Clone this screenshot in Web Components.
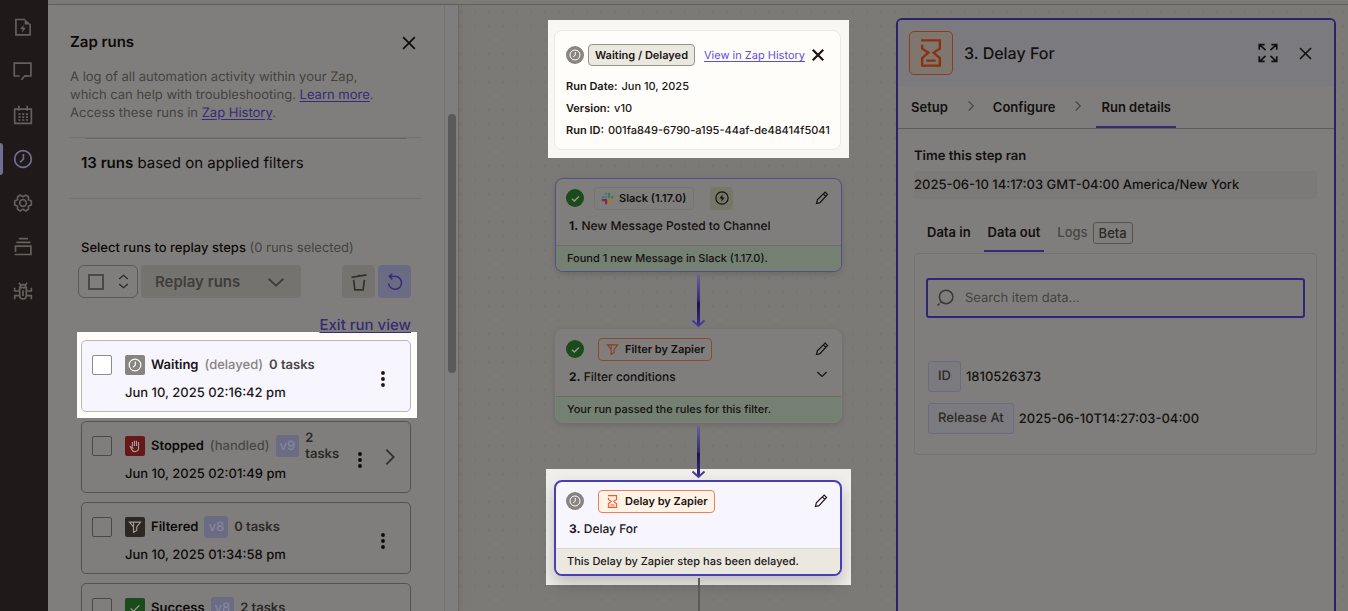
<!DOCTYPE html>
<html lang="en">
<head>
<meta charset="utf-8">
<title>Zap editor</title>
<style>
html, body { margin: 0; height: 100%; }
body { overflow: hidden; background: #7c7a77; font-family: Inter, "Open Sans", sans-serif; font-size: 13px; color: #0d0a09; text-rendering: geometricPrecision; }
</style>
</head>
<body>
<zap-editor></zap-editor>
<script>
const ICONS = {
  zapfile: '<path d="M14.5 2.5H3.5v18.500h17V8" transform="translate(0 .5)"/><path d="M14 2.500 21.500 9H14z" fill="currentColor" stroke="none"/><path d="M12.800 9.500 8.500 14.500h3l-.7 4 4.700-5.500h-3z" fill="currentColor" stroke="none"/>',
  comment: '<path d="M13.500 18H21.500V2.500H1.500V18H8"/><path d="M10 22.500 14 18H18"/>',
  calendar: '<path d="M2 5h20v17H2z"/><path d="M7 1v6M17 1v6"/><path d="M6.500 11h2.500M11 11h2.500M15.500 11H18M6.500 14.500h2.500M11 14.500h2.500M15.500 14.500H18M6.500 18h2.500M11 18h2.500M15.500 18H18"/>',
  clock: '<circle cx="12" cy="12" r="10"/><path d="M12.500 6v6L8.500 16"/>',
  gear: '<circle cx="12" cy="12" r="4"/><path d="M8.800 2.500 12 4.500 15.200 2.500 18.500 4.500V8L22 9.500V14.500L18.500 16V19.500L15.200 21.500 12 19.500 8.800 21.500 5.500 19.500V16L2 14.500V9.500L5.500 8V4.500z" stroke-linejoin="round"/>',
  stack: '<path d="M7 2h11M4 6.500h17M2 21h19.500V11H3v7"/>',
  bug: '<path d="M8 8h8v9c0 2.500-1.500 4.500-4 4.500S8 19.500 8 17z"/><path d="M8.500 8c0-5 7-5 7 0M7 2l2.500 3M17 2l-2.500 3M2 8v4h6M22 8v4h-6M2 22v-4.500h6M22 22v-4.500h-6M12 11v7"/>',
  close: '<path d="m5 5 14 14M19 5 5 19"/>',
  chevdown: '<path d="m4 8.500 8 7.500 8-7.500"/>',
  chevright: '<path d="m8 4 8 8-8 8"/>',
  updown: '<path d="m5 8 7-6 7 6M5 16l7 6 7-6"/>',
  trash: '<path d="M3 6.500 21 3.500M10 5l4-1M5.500 9.500 7 21.500h10L18.500 9.500"/>',
  replay: '<path d="M3.500 14a8.600 8.600 0 1 0 8.500-9.500H5"/><path d="M8.500 1 4.500 4.500l4 4"/>',
  kebab: '<g fill="currentColor" stroke="none"><circle cx="12" cy="4.800" r="2.300"/><circle cx="12" cy="12" r="2.300"/><circle cx="12" cy="19.200" r="2.300"/></g>',
  hand: '<path d="M7.500 13V5M11 12V3M14.500 12V3M18 12V5M18 10v6c0 3.500-2.500 5.500-6 5.500-3 0-5-1.500-6-4L4 13l3.500 1.500 1.500 2.500"/>',
  filter: '<path d="M2.500 3.500h19L15 12v6l-5.500 3V12L2.500 3.500h7v8"/>',
  check: '<path d="m4.500 12.500 5 5 10-10"/>',
  hourglass: '<path d="M3.500 1.200H19.600V8.300L14.200 11.700 19.600 16.300V22.800H4.400V16.300L9.800 11.700 4.400 8.300V5M8 18.600h8"/>',
  pencil: '<path d="m2.500 21.500 1.500-6.500L17.500 2 21.500 6 8.500 20z M14 4.500l5 5"/>',
  bolt: '<circle cx="12" cy="12" r="10.500"/><path d="M13 5.500 7.500 13H11.500L11 18.500 16.500 11H12.500z" fill="currentColor" stroke="none"/>',
  expand: '<path d="M1.500 8V2h6.500M2 2l7 6.500M16 2h6.500v6M22 2l-7 6.500M1.500 16v6h6.500M2 22l7-6.500M22.500 16v6H16M22 22l-7-6.500"/>',
  search: '<circle cx="13.500" cy="10.500" r="9"/><path d="m7 17-1.500 1.500M4.500 19.500 2 22"/>',
  slack: '<g stroke="none"><rect fill="#8a2440" x="1" y="13" width="10" height="4" rx="2"/><rect fill="#8a2440" x="7.500" y="13" width="4" height="10" rx="2"/><rect fill="#3f7c8c" x="7.500" y="1" width="4" height="4.500" rx="2"/><rect fill="#3f7c8c" x="1" y="7.500" width="10.500" height="4" rx="2"/><rect fill="#3b7a5a" x="13" y="1" width="4" height="10.500" rx="2"/><rect fill="#3b7a5a" x="18.500" y="7.500" width="4.500" height="4" rx="2"/><rect fill="#a07c28" x="13" y="13" width="10" height="4" rx="2"/><rect fill="#a07c28" x="13" y="18.500" width="4" height="4.500" rx="2"/></g>'
};
const sheet = css => `<style>*{box-sizing:border-box} button{font:inherit;color:inherit;background:none;border:0;padding:0;margin:0;text-align:left} ${css}</style>`;
const define = (name, css, html) => customElements.define(name, class extends HTMLElement {
  constructor() {
    super();
    this.attachShadow({ mode: 'open' });
  }
  connectedCallback() {
    this.shadowRoot.innerHTML = sheet(css) + (typeof html === 'function' ? html(this) : html);
  }
});

define('z-icon', ':host{display:inline-flex;flex:none} svg{display:block;overflow:visible}',
  el => `<svg width="${el.getAttribute('size') || 20}" height="${el.getAttribute('size') || 20}" viewBox="0 0 24 24" fill="none" stroke="currentColor" stroke-width="${el.getAttribute('weight') || 2}" aria-hidden="true">${ICONS[el.getAttribute('name')]}</svg>`);

/* Left navigation rail */
define('side-rail', `
  :host{display:block;flex:none;width:48px;background:#1f1a19;color:#64605d;padding-top:5px}
  nav{display:flex;flex-direction:column}
  button{height:44px;width:100%;display:flex;align-items:center;justify-content:center;position:relative;padding-right:2px}
  button[aria-current]{color:#716d94}
  button[aria-current]::before{content:"";position:absolute;left:0;top:6px;width:3px;height:32px;background:#716d94;border-radius:0 3px 3px 0}
`, `<nav aria-label="Editor">
  <button aria-label="Zap details"><z-icon name="zapfile"></z-icon></button>
  <button aria-label="Notes"><z-icon name="comment"></z-icon></button>
  <button aria-label="Schedule"><z-icon name="calendar"></z-icon></button>
  <button aria-label="Zap runs" aria-current="page"><z-icon name="clock"></z-icon></button>
  <button aria-label="Settings"><z-icon name="gear"></z-icon></button>
  <button aria-label="Versions"><z-icon name="stack"></z-icon></button>
  <button aria-label="Troubleshoot"><z-icon name="bug"></z-icon></button>
</nav>`);

/* One entry in the list of runs */
define('run-card', `
  :host{display:flex;align-items:stretch;height:72px;border:1px solid #555351;border-radius:5px;padding:0 15px 0 10px;color:#0d0a09}
  :host([lit]){background:#f7f5fe;border-color:#b9b6b0;--tick:#fff;--muted:#88847f;--tasks:#4a4542;--tickline:#8f8b87;color:#201515}
  input{appearance:none;flex:none;width:20px;height:20px;margin:14px 13px 0 0;border:1px solid #47443f;background:var(--tick,#807e7c);border-color:var(--tickline,#4b4846);border-radius:2px}
  .body{flex:1;min-width:0;padding-top:13px}
  .row{display:flex;align-items:center;gap:6px;height:22px;font-weight:600;line-height:16px;white-space:nowrap}
  .row>*{flex:none}
  .tile{width:20px;height:20px;border-radius:2px;display:grid;place-items:center;background:var(--tile);color:var(--glyph,#a09c98)}
  .note{font-weight:500;color:var(--muted,#4a4845)}
  .ver{background:#6c6b84;color:#86859f;border-radius:3px;height:22px;padding:0 4px;line-height:22px;font-weight:500}
  .row>.tasks{flex:0 1 auto;min-width:0;white-space:normal;color:var(--tasks,#2c2927)}
  .date{margin-top:7px;line-height:20px;font-weight:500}
  .menu{align-self:center;display:grid;place-items:center;width:24px;height:24px;margin-top:5px}
  .open{align-self:center;width:10px;margin-left:13px;display:flex;justify-content:center;color:#33302e}
`, el => {
  const a = n => el.getAttribute(n);
  return `<input type="checkbox" aria-label="Select ${a('status')} run">
  <div class="body"><div class="row"><span class="tile" style="--tile:${a('tile')}${el.hasAttribute('lit') ? ';--glyph:#fff' : ''}"><z-icon name="${a('icon')}" size="14"></z-icon></span>
  <span>${a('status')}</span>${a('note') ? `<span class="note">(${a('note')})</span>` : ''}${a('version') ? `<span class="ver">${a('version')}</span>` : ''}<span class="tasks">${a('tasks')}</span></div>
  <div class="date"><slot></slot></div></div>
  <button class="menu" aria-label="Run actions"><z-icon name="kebab" size="20"></z-icon></button>
  ${el.hasAttribute('expandable') ? '<button class="open" aria-label="Open run"><z-icon name="chevright" size="22"></z-icon></button>' : ''}`;
});

/* Zap runs panel */
define('runs-panel', `
  :host{display:flex;flex:none;width:411px;background:#807e7c;border-right:1px solid #6b6967;box-shadow:3px 0 5px #0000000d;position:relative;z-index:1}
  .main{flex:1;min-width:0;overflow:hidden;padding:0 22px}
  header{display:flex;align-items:center;justify-content:space-between;height:24px;margin-top:25px;padding-right:3px}
  h1{margin:0;font-size:15px;font-weight:600;line-height:24px}
  header button{display:grid;color:#0d0a09;padding-top:2px}
  p{margin:14px 0 0;line-height:18px;color:#44423f;white-space:nowrap}
  a{color:#352b78;text-underline-offset:2px}
  .rule{border-top:1px solid #747270;margin:15px 0 0}
  .rule i{display:block;height:1px;margin:0 15px;background:#6b6967}
  .count{font-size:15px;line-height:24px;padding:12px 11px 23px}
  .count b{font-weight:600}
  .line{border-top:1px solid #747270}
  .select{font-weight:500;line-height:20px;margin:39px 0 0 11px}
  .select span{color:#44423f;font-weight:400}
  .tools{display:flex;align-items:center;gap:3px;margin:7px 11px 0 8px}
  .bulk{display:flex;align-items:center;justify-content:space-between;width:60px;height:33px;border:1px solid #5c5a58;border-radius:6px;padding:0 6px 0 9px;color:#2c2927}
  .bulk input{appearance:none;margin:0;width:16px;height:16px;border:2px solid #4b4846}
  .bulk button{display:grid}
  .replay{display:flex;align-items:center;justify-content:space-between;width:160px;height:33px;padding:0 14px;background:#757370;color:#403d3a;font-size:15px;font-weight:600;border-radius:4px}
  .sq{width:33px;height:33px;display:grid;place-items:center;border-radius:4px;background:#757370;color:#33302e}
  .tools .push{margin-left:auto}
  .sq.blue{background:#6c6b84;color:#352b78}
  .exit{display:flex;justify-content:flex-end;margin:15px 11px 0 0;font-size:15px;line-height:24px;font-weight:500}
  .exit a{position:relative;z-index:1}
  .spot{background:#fffdf9;margin:-5px 5px 0 7px;padding:8px 6px 6px 4px}
  .cards{display:flex;flex-direction:column;gap:9px;margin:3px 11px 0 11px}
  .bar{flex:none;width:14px;border-left:1px solid #747270;background:#7f7e7f;padding:109px 2px 0 3px}
  .bar i{display:block;width:8px;height:259px;border-radius:4px;background:#5b5a5a}
`, `<div class="main">
  <header><h1>Zap runs</h1><button aria-label="Close Zap runs"><z-icon name="close"></z-icon></button></header>
  <p>A log of all automation activity within your Zap,<br>which can help with troubleshooting. <a href="#">Learn more</a>.<br>Access these runs in <a href="#">Zap History</a>.</p>
  <div class="rule"><i></i></div>
  <div class="count"><b>13 runs</b> based on applied filters</div>
  <div class="line"></div>
  <div class="select">Select runs to replay steps <span>(0 runs selected)</span></div>
  <div class="tools"><div class="bulk"><input type="checkbox" aria-label="Select all runs"><button aria-label="Selection options"><z-icon name="updown" size="15" weight="2"></z-icon></button></div>
    <button class="replay">Replay runs <z-icon name="chevdown" size="22"></z-icon></button>
    <button class="sq push" aria-label="Clear"><z-icon name="trash"></z-icon></button>
    <button class="sq blue" aria-label="Refresh"><z-icon name="replay" size="18"></z-icon></button></div>
  <div class="exit"><a href="#">Exit run view</a></div>
  <div class="spot"><run-card lit icon="clock" tile="#88847f" status="Waiting" note="delayed" tasks="0 tasks">Jun 10, 2025 02:16:42 pm</run-card></div>
  <div class="cards">
    <run-card expandable icon="hand" tile="#661818" status="Stopped" note="handled" version="v9" tasks="2 tasks">Jun 10, 2025 02:01:49 pm</run-card>
    <run-card icon="filter" tile="#2c2625" status="Filtered" version="v8" tasks="0 tasks">Jun 10, 2025 01:34:58 pm</run-card>
    <run-card icon="check" tile="#1b4a1b" status="Success" version="v8" tasks="2 tasks"></run-card>
  </div></div><div class="bar"><i></i></div>`);

define('status-dot', `
  :host{display:grid;place-items:center;flex:none;width:18px;height:18px;border-radius:50%;background:#1b4a1b;color:#9a9895}
  :host([kind=wait]){background:#88847f;color:#fff}
`, el => el.getAttribute('kind') === 'wait' ? '<z-icon name="clock" size="12"></z-icon>' : '<z-icon name="check" size="11" weight="3"></z-icon>');

/* Step card on the canvas */
define('flow-card', `
  :host{display:block;flex:none;width:287px;background:#807e7c;border:1px solid #807e7c;border-radius:8px;box-shadow:0 2px 6px #0002;overflow:hidden;color:#13100f}
  :host([trigger]){border-color:#544d8a}
  :host([lit]){width:288px;border:2px solid #4a3db8;background:#f7f5fe;color:#201515;box-shadow:0 8px 16px #0003}
  .top{display:flex;align-items:center;height:22px;margin:8px 12px 0 10px}
  .chip{display:flex;align-items:center;gap:5px;height:23px;border:1px solid #777573;border-radius:4px;padding:0 7px 0 6px;margin-left:10px;font-size:11px;font-weight:600;white-space:nowrap}
  .chip.orange{border-color:#8b4a35;margin-left:14px;gap:6px;padding:0 6px 0 7px}
  .chip.orange z-icon{color:#8b3d1e}
  :host([lit]) .chip{background:#fff3e6;border-color:#e8825c}
  :host([lit]) .chip z-icon{color:#f05a28}
  .bolt{display:grid;place-items:center;width:23px;height:23px;border-radius:4px;background:#777768;margin-left:16px}
  .edit{margin-left:auto;display:grid}
  .title{display:flex;justify-content:space-between;align-items:center;margin:7px 12px 9px 13px;line-height:20px;font-size:12px;font-weight:500}
  .title b{font-weight:700}
  .strip{border-top:1px solid #6e6c6a;background:#748071;line-height:25px;height:26px;padding-left:11px;font-size:11px;font-weight:500}
  :host([lit]) .strip{background:#ebe8df;border-color:#d9d6cd}
`, el => {
  const lit = el.hasAttribute('lit'), tr = el.hasAttribute('trigger');
  return `<div class="top"><status-dot kind="${lit ? 'wait' : 'ok'}"></status-dot>
  <span class="chip ${tr ? '' : 'orange'}"><z-icon name="${el.getAttribute('icon')}" size="13"></z-icon>${el.getAttribute('app')}</span>
  ${tr ? '<span class="bolt"><z-icon name="bolt" size="14"></z-icon></span>' : ''}
  <button class="edit" aria-label="Edit step"><z-icon name="pencil" size="14"></z-icon></button></div>
  <div class="title"><span><b>${el.getAttribute('num')}.</b> ${el.getAttribute('name')}</span>${el.hasAttribute('collapsible') ? '<button aria-label="Expand conditions"><z-icon name="chevdown" size="14"></z-icon></button>' : ''}</div>
  <div class="strip"><slot></slot></div>`;
});

define('flow-link', ':host{display:block;flex:none;position:relative;z-index:2;height:57px;padding:3px 0 1px} svg{display:block}',
  `<svg width="15" height="53" viewBox="0 0 15 53" fill="none"><defs><linearGradient id="g" x1="0" y1="0" x2="0" y2="1"><stop offset="0" stop-color="#65629a"/><stop offset=".5" stop-color="#352b78"/><stop offset=".55" stop-color="#1b1250"/><stop offset="1" stop-color="#3a2f8a"/></linearGradient></defs><rect x="6" width="3" height="51" fill="url(#g)"/><path d="m1.500 45.500 6 5.500 6-5.500" stroke="#463b9c" stroke-width="2"/></svg>`);

define('run-summary', `
  :host{display:block;flex:none;background:#f8f7f4;padding:10px 8px 8px 6px;color:#201515}
  .card{width:287px;height:120px;background:#fffdf9;border:1px solid #ece9e3;border-radius:8px;padding:13px 11px 0}
  .top{display:flex;align-items:center;height:22px;margin-bottom:9px;white-space:nowrap}
  .badge{margin:0 9px 0 4px;height:22px;line-height:20px;padding:0 6px;background:#ebe8df;border:1px solid #95928c;border-radius:4px;font-size:11px;font-weight:600}
  a{font-size:11px;color:#5f4fe0;text-underline-offset:2px}
  button{margin-left:4px;display:grid}
  dl{margin:0;font-size:11px;line-height:22px;font-weight:500}
  dl div{display:flex;gap:4px;white-space:nowrap} dt{font-weight:600} dd{margin:0}
`, `<div class="card"><div class="top"><status-dot kind="wait"></status-dot><span class="badge">Waiting / Delayed</span><a href="#">View in Zap History</a><button aria-label="Close summary"><z-icon name="close" size="18" weight="3"></z-icon></button></div>
  <dl><div><dt>Run Date:</dt><dd>Jun 10, 2025</dd></div><div><dt>Version:</dt><dd>v10</dd></div><div><dt>Run ID:</dt><dd>001fa849-6790-a195-44af-de48414f5041</dd></div></dl></div>`);

define('zap-canvas', `
  :host{display:flex;flex-direction:column;align-items:center;flex:1;min-width:0;padding:15px 0 0 42px}
  .first{margin-top:20px}
  .spot{flex:none;margin-top:-11px;padding:11px 9px 9px 8px;background:#f0eeea}
  .tail{flex:none;width:2px;height:60px;margin-top:-7px;background:#5c5a55;position:relative;z-index:2}
`, `<run-summary></run-summary>
  <flow-card class="first" trigger icon="slack" app="Slack (1.17.0)" num="1" name="New Message Posted to Channel">Found 1 new Message in Slack (1.17.0).</flow-card>
  <flow-link></flow-link>
  <flow-card collapsible icon="filter" app="Filter by Zapier" num="2" name="Filter conditions">Your run passed the rules for this filter.</flow-card>
  <flow-link></flow-link>
  <div class="spot"><flow-card lit icon="hourglass" app="Delay by Zapier" num="3" name="Delay For">This Delay by Zapier step has been delayed.</flow-card></div>
  <div class="tail"></div>`);

/* Step details panel */
define('step-panel', `
  :host{display:block;flex:none;width:440px;margin:13px 12px 0 0;border:2px solid #2b2268;border-bottom:0;border-radius:6px 6px 0 0;background:#807e7c;overflow:hidden;color:#13100f;font-weight:500}
  header{display:flex;align-items:center;height:66px;padding:0 19px 0 11px;background:#7b7a7e}
  .tile{width:44px;height:44px;border:1px solid #8b3d1e;border-radius:5px;background:#7f766e;color:#8b3010;display:grid;place-items:center;margin-right:11px}
  h2{margin:0;font-size:16px;font-weight:500;flex:1}
  header button{display:grid;margin-left:18px}
  .steps{display:flex;align-items:center;height:43px;padding:0 9px;border-bottom:1px solid #5f5d5b;font-weight:600}
  .steps button{height:42px;padding:0 4px}
  .steps z-icon{margin:0 11px 2px 12px;color:#44423f}
  .steps .on{box-shadow:inset 0 -2px #352b78;padding:0 5px}
  .body{padding:17px 17px 0 16px}
  h3{margin:0;font-size:13px;font-weight:600;line-height:20px}
  .time{background:#7c7a78;height:28px;line-height:28px;border-radius:3px;margin-top:5px}
  .tabs{display:flex;height:40px;margin-top:14px;padding-left:9px;font-weight:600;gap:9px}
  .tabs button{padding:0 4px;height:39px;line-height:39px;display:flex;align-items:center;gap:5px}
  .tabs .on{box-shadow:inset 0 -2px #352b78}
  .tabs .off{color:#484643;font-weight:500}
  .beta{border:1px solid #55524f;border-radius:3px;line-height:20px;padding:0 5px;color:#2c2927;font-weight:500}
  .box{border:1px solid #757371;border-radius:4px;height:202px;padding:24px 11px 0}
  .search{display:flex;align-items:center;height:40px;border:2px solid #2f2678;border-radius:3px;padding-left:8px;color:#3b3936}
  input{flex:1;min-width:0;border:0;outline:0;background:none;font:400 13px Inter,sans-serif;text-rendering:inherit;padding:0 0 0 11px;color:inherit}
  input::placeholder{color:#44423f;opacity:1}
  dl{margin:43px 0 0 2px}
  dl div{display:flex;align-items:center;gap:5px;margin-bottom:11px}
  dt{border:1px solid #6c6b84;background:#7b7a7e;border-radius:3px;height:31px;line-height:29px;padding:0 9px;color:#2c2927}
  dd{margin:0}
`, `<header><span class="tile"><z-icon name="hourglass" size="28"></z-icon></span><h2>3. Delay For</h2><button aria-label="Expand"><z-icon name="expand" weight="2"></z-icon></button><button aria-label="Close"><z-icon name="close" size="19"></z-icon></button></header>
  <nav class="steps"><button>Setup</button><z-icon name="chevright" size="14"></z-icon><button>Configure</button><z-icon name="chevright" size="14"></z-icon><button class="on">Run details</button></nav>
  <div class="body"><h3>Time this step ran</h3><div class="time">2025-06-10 14:17:03 GMT-04:00 America/New York</div>
  <div class="tabs"><button>Data in</button><button class="on">Data out</button><button class="off">Logs <span class="beta">Beta</span></button></div>
  <div class="box"><label class="search"><z-icon name="search" size="18"></z-icon><input type="text" aria-label="Search item data" placeholder="Search item data..."></label>
  <dl><div><dt>ID</dt><dd>1810526373</dd></div><div><dt>Release At</dt><dd>2025-06-10T14:27:03-04:00</dd></div></dl></div></div>`);

define('zap-editor', `
  :host{display:flex;height:100vh}
  .work{flex:1;min-width:0;display:flex;flex-direction:column}
  .topbar{flex:none;height:5px;background:#7c7a77;border-bottom:1px solid #62605e}
  .cols{flex:1;min-height:0;display:flex;background:radial-gradient(circle at 7px 7px,#777572 1px,transparent 1px) 0 0/14px 14px #7c7a77}
`, `<side-rail></side-rail><div class="work"><div class="topbar"></div><div class="cols"><runs-panel></runs-panel><zap-canvas></zap-canvas><step-panel></step-panel></div></div>`);
</script>
</body>
</html>
